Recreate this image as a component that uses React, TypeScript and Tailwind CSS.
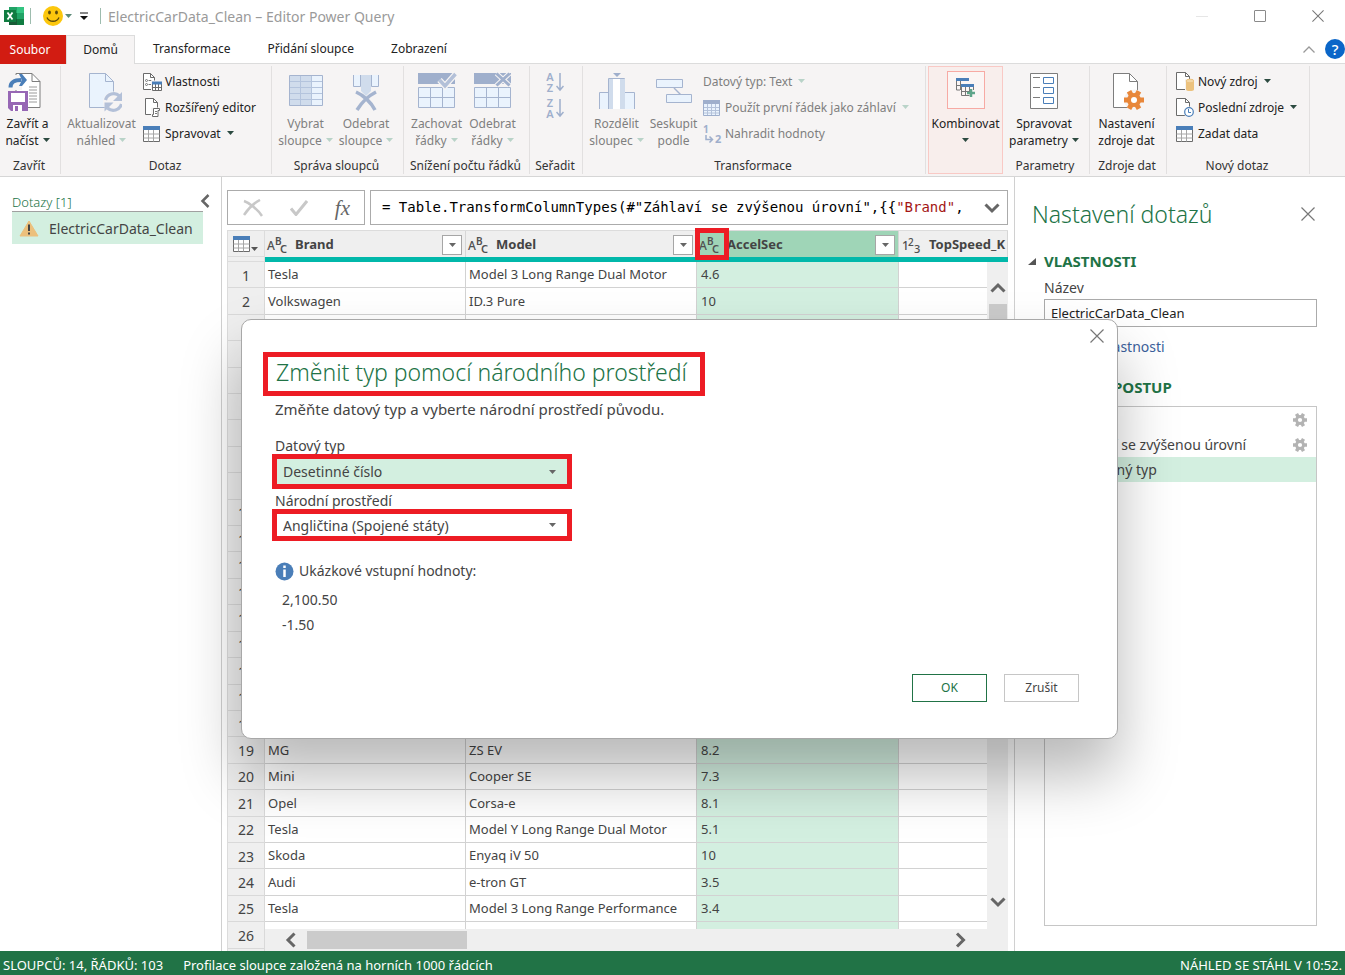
import { useState, type ReactNode } from 'react';
import { clsx } from 'clsx';

type Row = { brand?: string; model?: string; accel?: string };

const rows: Row[] = Array.from({ length: 27 }, () => ({}));
rows[0] = { brand: 'Tesla', model: 'Model 3 Long Range Dual Motor', accel: '4.6' };
rows[1] = { brand: 'Volkswagen', model: 'ID.3 Pure', accel: '10' };
rows[18] = { brand: 'MG', model: 'ZS EV', accel: '8.2' };
rows[19] = { brand: 'Mini', model: 'Cooper SE', accel: '7.3' };
rows[20] = { brand: 'Opel', model: 'Corsa-e', accel: '8.1' };
rows[21] = { brand: 'Tesla', model: 'Model Y Long Range Dual Motor', accel: '5.1' };
rows[22] = { brand: 'Skoda', model: 'Enyaq iV 50', accel: '10' };
rows[23] = { brand: 'Audi', model: 'e-tron GT', accel: '3.5' };
rows[24] = { brand: 'Tesla', model: 'Model 3 Long Range Performance', accel: '3.4' };

/* ---------- icons ---------- */

function Caret({ className = 'text-[#2c4a40]' }: { className?: string }) {
  return (
    <svg width="7" height="4" viewBox="0 0 7 4" className={clsx('inline-block shrink-0', className)}>
      <path d="M0 0h7L3.5 4z" fill="currentColor" />
    </svg>
  );
}

function ExcelIcon() {
  return (
    <svg width="20" height="18" viewBox="0 0 20 18">
      <path d="M5 0h8v6H5z" fill="#21a366" />
      <path d="M13 0h7v6h-7z" fill="#33c481" />
      <path d="M5 6h8v6H5z" fill="#107c41" />
      <path d="M13 6h7v6h-7z" fill="#21a366" />
      <path d="M5 12h15v6H5z" fill="#185c37" />
      <path d="M13 12h7v6h-7z" fill="#107c41" />
      <path d="M0 3h12v12H0z" fill="#107c41" />
      <path d="M3.5 5.5l5 7M8.5 5.5l-5 7" stroke="#fff" strokeWidth="1.8" />
    </svg>
  );
}

function SmileIcon() {
  return (
    <svg width="20" height="20" viewBox="0 0 20 20">
      <circle cx="10" cy="10" r="10" fill="#fcc70d" />
      <ellipse cx="6.5" cy="6.5" rx="1.4" ry="2" fill="#5c4a0c" />
      <ellipse cx="13.5" cy="6.5" rx="1.4" ry="2" fill="#5c4a0c" />
      <path d="M4 11.5c2 5 10 5 12 0" fill="none" stroke="#5c4a0c" strokeWidth="1.3" />
    </svg>
  );
}

function SaveLoadIcon() {
  return (
    <svg width="40" height="40" viewBox="0 0 40 40">
      <path d="M8 1.5h16l8 8v26H8z" fill="#fff" stroke="#7d7d7d" />
      <path d="M24 1.5v8h8" fill="none" stroke="#7d7d7d" />
      <path d="M21 15h8M21 18h8M21 21h8M21 24h8M21 27h8M21 30h8" stroke="#9a9a9a" />
      <path d="M0 3h14v15H0z" fill="#f6f4f4" />
      <path d="M2.500 15.500c0-6 4-7.500 11-7.500" fill="none" stroke="#4a7eb8" strokeWidth="4" />
      <path d="M11 2h3l5 6-5 6h-3l3-6z" fill="#4a7eb8" />
      <path d="M0 19h20v20H3l-3-3z" fill="#9767b5" />
      <path d="M3 21h14v9H3z" fill="#fff" />
      <path d="M5 33h9v6H5z" fill="#fff" />
      <path d="M7 34h3v5H7z" fill="#9767b5" />
    </svg>
  );
}

function RefreshPageIcon() {
  return (
    <svg width="40" height="40" viewBox="-7 0 40 40">
      <path d="M.5 1.500h16l8 8v26H.5z" fill="#eaf3fd" stroke="#a5b4cf" />
      <path d="M16.500 1.500v8h8" fill="none" stroke="#a5b4cf" />
      <circle cx="24.500" cy="30" r="10.500" fill="#f6f4f4" />
      <path d="M16.500 28a8.500 8.500 0 0 1 14-4M32.500 32a8.500 8.500 0 0 1-14 4" fill="none" stroke="#b3c0d8" strokeWidth="3.200" />
      <path d="M33 20v9h-9zM15.500 39.500v-9h9z" fill="#b3c0d8" />
    </svg>
  );
}

function PropertiesIcon() {
  return (
    <svg width="20" height="19" viewBox="0 0 20 19">
      <path d="M.5.5h7l4 4v12H.5z" fill="#fff" stroke="#6b6b6b" />
      <path d="M7.500.5v4h4" fill="none" stroke="#6b6b6b" />
      <circle cx="3.500" cy="7.500" r="1" fill="none" stroke="#777" />
      <circle cx="3.500" cy="11.500" r="1" fill="none" stroke="#777" />
      <path d="M5.500 7.500h3M5.500 11.500h3" stroke="#777" />
      <path d="M8 7.500h12V19H8z" fill="#f6f4f4" />
      <path d="M9.500 9.500h9v8h-9zM9.500 14.500h9M12.500 11v6.500M15.500 11v6.500" fill="#fff" stroke="#6b6b6b" />
      <path d="M9 8.500h10v3H9z" fill="#4a7eb8" />
    </svg>
  );
}

function EditorIcon() {
  return (
    <svg width="18" height="20" viewBox="0 0 18 20">
      <path d="M2.500.5h8l4 4v12h-12z" fill="#fff" stroke="#6b6b6b" />
      <path d="M10.500.5v4h4" fill="none" stroke="#6b6b6b" />
      <path d="M8 9.500h10v10H8z" fill="#f6f4f4" />
      <path d="M10.500 10.500h6v2h-1.500v6H9.500v-2h1z" fill="#fff" stroke="#6b6b6b" />
      <path d="M12 13.500h2M12 15.500h2" stroke="#777" />
    </svg>
  );
}

function TableIcon() {
  return (
    <svg width="17" height="16" viewBox="0 0 17 16" className="shrink-0">
      <path d="M.5.5h16v15H.5z" fill="#fff" stroke="#6b6b6b" />
      <path d="M5.500 3.500v12M10.500 3.500v12M.5 8h16M.5 12h16" stroke="#a6a6a6" />
      <path d="M0 0h17v4H0z" fill="#4a7eb8" />
    </svg>
  );
}

function FirstRowIcon() {
  return (
    <svg width="17" height="16" viewBox="0 0 17 16" className="shrink-0">
      <path d="M.5.5h16v15H.5z" fill="#eaf3fd" />
      <path d="M4.500 3.500v12M8.500 3.500v12M12.500 3.500v12M.5 7.500h16M.5 10.500h16M.5 13h16" stroke="#b4c2da" />
      <path d="M.5.5h16v15H.5z" fill="none" stroke="#9fafcc" />
      <path d="M0 0h17v4H0z" fill="#9fafcc" />
    </svg>
  );
}

function ChooseColumnsIcon() {
  return (
    <svg width="36" height="40" viewBox="0 0 36 40">
      <path d="M1.500 3.500h33v30h-33z" fill="#eaf3fd" />
      <path d="M1.500 3.500h22v30h-22z" fill="#d0dcec" />
      <path d="M1.500 9.500h33M1.500 15.500h33M1.500 21.500h33M1.500 27.500h33M12.500 3.500v30M23.500 3.500v30" stroke="#b4c4dd" />
      <path d="M1.500 3.500h33v30h-33z" fill="none" stroke="#a5b4cf" />
    </svg>
  );
}

function RemoveColumnsIcon() {
  return (
    <svg width="28" height="40" viewBox="0 0 28 40">
      <path d="M1.500 3v11.500h7V3M19.500 3v11.500h7V3" fill="#eaf3fd" stroke="#a5b4cf" />
      <path d="M9 3h10v16l-5 5-5-5z" fill="#d0dcec" />
      <path d="M4 20c7 3 15 10 19 18M24 20c-8 4-14 10-19 18" fill="none" stroke="#a5b4cf" strokeWidth="3.500" />
    </svg>
  );
}

function RowsIcon({ mark }: { mark: 'keep' | 'remove' }) {
  return (
    <svg width="40" height="40" viewBox="0 0 40 40">
      <path d="M1 1h37v11H1z" fill="#9fafcc" />
      <path d="M1.500 15.500h36v20h-36zM1.500 25.500h36M13.500 15.500v20M25.500 15.500v20" fill="#eaf3fd" stroke="#a5b4cf" />
      {mark === 'keep' ? (
        <>
          <path d="M22.500 8l5.500 6L38.500 2" fill="none" stroke="#f6f4f4" strokeWidth="6" />
          <path d="M22.500 8l5.500 6L38.500 2" fill="none" stroke="#b3c0d8" strokeWidth="3.500" />
        </>
      ) : (
        <>
          <path d="M23.500 1.500l13 12M36.500 1.500l-13 12" stroke="#f6f4f4" strokeWidth="5" />
          <path d="M23.500 1.500l13 12M36.500 1.500l-13 12" stroke="#9fafcc" strokeWidth="3" />
        </>
      )}
    </svg>
  );
}

function SortIcon({ top, bottom }: { top: string; bottom: string }) {
  return (
    <span className="flex items-center gap-0.5 text-[#9fafcc]">
      <span className="flex w-2 flex-col items-center gap-0.5 text-[11px] leading-[9px] font-semibold">
        <span>{top}</span>
        <span>{bottom}</span>
      </span>
      <svg width="8" height="20" viewBox="0 0 8 20">
        <path d="M4 1v17M.5 14L4 18l3.500-4" fill="none" stroke="currentColor" strokeWidth="1.500" />
      </svg>
    </span>
  );
}

function SplitColumnIcon() {
  return (
    <svg width="38" height="40" viewBox="0 0 38 40">
      <path d="M1.500 37V20.500h10V37M26.500 37V20.500h10V37" fill="#eaf3fd" stroke="#a5b4cf" />
      <path d="M10.500 37V6.500h16V37" fill="#fff" stroke="#a5b4cf" />
      <path d="M11 7h4v30h-4zM22 7h5v30h-5z" fill="#d0dcec" />
      <path d="M15 1h8l-4 4z" fill="#9fafcc" />
    </svg>
  );
}

function GroupByIcon() {
  return (
    <svg width="38" height="40" viewBox="0 0 38 40">
      <path d="M19 16l8 8" stroke="#a5b4cf" strokeWidth="1.500" />
      <path d="M1.500 7.500h26v8h-26zM11.500 22.500h25v8h-25z" fill="#eaf3fd" stroke="#a5b4cf" />
    </svg>
  );
}

function ReplaceIcon() {
  return (
    <svg width="19" height="19" viewBox="0 0 19 19" className="overflow-visible font-['Noto_Sans',sans-serif]">
      <text x="0" y="8" fontSize="10" fontWeight="700" fill="#9fafcc">1</text>
      <text x="12" y="18" fontSize="11" fontWeight="700" fill="#9fafcc">2</text>
      <path d="M3 10v4.500h6M6.500 11.500l3 3-3 3" fill="none" stroke="#9fafcc" strokeWidth="1.500" />
    </svg>
  );
}

function CombineIcon() {
  return (
    <svg width="20" height="20" viewBox="0 0 20 20">
      <path d="M.5 1v11H4M.5 7.500H5M4.500 3v9" fill="none" stroke="#777" />
      <path d="M0 0h13v3H0z" fill="#4a7eb8" />
      <path d="M5.500 8v9.500h8M5.500 13.500h8M9.500 9v8.500M13.500 9v5M17.500 9v3" fill="none" stroke="#777" />
      <path d="M5 6h13v3H5z" fill="#4a7eb8" />
      <path d="M15 11v8M11 15h8" stroke="#5fa58a" strokeWidth="2.500" />
    </svg>
  );
}

function ParametersIcon() {
  return (
    <svg width="28" height="40" viewBox="0 0 28 40">
      <path d="M.5 1.500h27v35H.5z" fill="#fff" stroke="#7d7d7d" />
      <path d="M3 5.500h7M3 15.500h7M3 25.500h7" stroke="#7d7d7d" />
      <path d="M13.500 5.500h10v6h-10zM13.500 15.500h10v6h-10zM13.500 25.500h10v6h-10z" fill="none" stroke="#4a7eb8" />
    </svg>
  );
}

function Gear({ className, size }: { className: string; size: number }) {
  return (
    <svg width={size} height={size} viewBox="0 0 20 20" className={className}>
      <g fill="currentColor">
        <path d="M7.500 0h5v20h-5z" transform="rotate(30 10 10)" />
        <path d="M7.500 0h5v20h-5z" transform="rotate(90 10 10)" />
        <path d="M7.500 0h5v20h-5z" transform="rotate(150 10 10)" />
        <circle cx="10" cy="10" r="7" />
      </g>
      <circle cx="10" cy="10" r="3" fill="#fff" />
    </svg>
  );
}

function SourceSettingsIcon() {
  return (
    <span className="relative ml-1 block h-10 w-8">
      <svg width="26" height="38" viewBox="0 0 26 38">
        <path d="M.5 1.500h16l8 8v26H.5z" fill="#fff" stroke="#7d7d7d" />
        <path d="M16.500 1.500v8h8" fill="none" stroke="#7d7d7d" />
        <circle cx="21.500" cy="28" r="10.500" fill="#f6f4f4" />
      </svg>
      <Gear size={20} className="absolute top-[18px] left-[11px] text-[#e8873a]" />
    </span>
  );
}

function NewSourceIcon() {
  return (
    <svg width="18" height="20" viewBox="0 0 18 20">
      <path d="M.5.5h9l4 4v13H.5z" fill="#fff" stroke="#6b6b6b" />
      <path d="M9.500.5v4h4" fill="none" stroke="#6b6b6b" />
      <path d="M9 7h9v12H9z" fill="#f6f4f4" />
      <path d="M10 9v8.500c0 2 8 2 8 0V9z" fill="#ecc27e" />
      <ellipse cx="14" cy="9" rx="4" ry="1.800" fill="#f3d7a6" stroke="#ecc27e" />
    </svg>
  );
}

function RecentSourceIcon() {
  return (
    <svg width="18" height="20" viewBox="0 0 18 20">
      <path d="M.5.5h9l4 4v13H.5z" fill="#fff" stroke="#6b6b6b" />
      <path d="M9.500.5v4h4" fill="none" stroke="#6b6b6b" />
      <circle cx="13" cy="14" r="5.500" fill="#f6f4f4" />
      <circle cx="13" cy="14" r="4.300" fill="#fff" stroke="#4a7eb8" strokeWidth="1.200" />
      <path d="M12.500 11v3.500H15" fill="none" stroke="#4a7eb8" />
    </svg>
  );
}

function TextTypeIcon() {
  return (
    <svg width="20" height="18" viewBox="0 0 20 18" fill="#505050" className="shrink-0 overflow-visible font-['Noto_Sans',sans-serif]">
      <text x="-1" y="14" fontSize="12" fontWeight="500">A</text>
      <text x="7" y="9" fontSize="10" fontWeight="600">B</text>
      <text x="12" y="17" fontSize="11" fontWeight="600">C</text>
    </svg>
  );
}

function NumberTypeIcon() {
  return (
    <svg width="20" height="18" viewBox="0 0 20 18" fill="#505050" className="shrink-0 overflow-visible font-['Noto_Sans',sans-serif]">
      <text x="0" y="14" fontSize="12" fontWeight="500">1</text>
      <text x="6" y="10" fontSize="10" fontWeight="500">2</text>
      <text x="12" y="17" fontSize="11" fontWeight="500">3</text>
    </svg>
  );
}

function Cross({ size = 14 }: { size?: number }) {
  return (
    <svg width={size} height={size} viewBox="0 0 14 14">
      <path d="M.5.5l13 13M13.500.5l-13 13" stroke="#777" strokeWidth="1.200" />
    </svg>
  );
}

function Chevron({ direction }: { direction: 'up' | 'down' | 'left' | 'right' }) {
  const paths = {
    up: 'M1.500 11.500L8 5l6.500 6.500',
    down: 'M1.500 4.500L8 11l6.500-6.500',
    left: 'M11.500 1.500L5 8l6.500 6.500',
    right: 'M5 1.500L11.500 8 5 14.500',
  };
  return (
    <svg width="16" height="16" viewBox="0 0 16 16">
      <path d={paths[direction]} fill="none" stroke="#666" strokeWidth="3" />
    </svg>
  );
}

/* ---------- ribbon ---------- */

function Group({ label, className, children }: { label: string; className: string; children: ReactNode }) {
  return (
    <section className={clsx('flex shrink-0 flex-col border-r border-[#e2e0e0]', className)}>
      <div className="flex flex-1">{children}</div>
      <h2 className="h-4 pr-0.5 text-center leading-4 whitespace-nowrap text-[#333]">{label}</h2>
    </section>
  );
}

type BigButtonProps = { icon: ReactNode; lines: [string, string]; caret?: boolean; disabled?: boolean; className: string };

function BigButton({ icon, lines, caret = false, disabled = false, className }: BigButtonProps) {
  return (
    <button
      type="button"
      disabled={disabled}
      className={clsx('flex shrink-0 flex-col items-center pt-1.5 leading-[17px] whitespace-nowrap', disabled ? 'text-[#7f7f7f]' : 'text-[#222]', className)}
    >
      <span className="flex h-[43px] justify-center">{icon}</span>
      <span>{lines[0]}</span>
      <span className="flex items-center gap-1">
        {lines[1]}
        {caret && <Caret className={clsx('-mt-0.5', disabled ? 'text-[#b9d3c8]' : 'text-[#2c4a40]')} />}
      </span>
    </button>
  );
}

type SmallButtonProps = { icon?: ReactNode; label: string; caret?: boolean; disabled?: boolean };

function SmallButton({ icon, label, caret = false, disabled = false }: SmallButtonProps) {
  return (
    <button
      type="button"
      disabled={disabled}
      className={clsx('flex h-[26px] items-center whitespace-nowrap', disabled ? 'text-[#7f7f7f]' : 'text-[#222]')}
    >
      {icon && <span className="w-[22px] shrink-0">{icon}</span>}
      {label}
      {caret && <Caret className={clsx('-mt-0.5 ml-1.5', disabled ? 'text-[#b9d3c8]' : 'text-[#2c4a40]')} />}
    </button>
  );
}

function Ribbon() {
  return (
    <div className="flex h-[113px] shrink-0 border-b border-[#d6d6d6] bg-[#f6f4f4] pt-0.5 pb-0.5">
      <Group label="Zavřít" className="w-[61px]">
        <BigButton className="w-[55px]" icon={<SaveLoadIcon />} lines={['Zavřít a', 'načíst']} caret />
      </Group>
      <Group label="Dotaz" className="w-[211px]">
        <BigButton className="w-[81px]" icon={<RefreshPageIcon />} lines={['Aktualizovat', 'náhled']} caret disabled />
        <div className="pt-[3px] pl-px">
          <SmallButton icon={<PropertiesIcon />} label="Vlastnosti" />
          <SmallButton icon={<EditorIcon />} label="Rozšířený editor" />
          <SmallButton icon={<TableIcon />} label="Spravovat" caret />
        </div>
      </Group>
      <Group label="Správa sloupců" className="w-[132px]">
        <BigButton className="w-[67px]" icon={<ChooseColumnsIcon />} lines={['Vybrat', 'sloupce']} caret disabled />
        <BigButton className="w-[54px]" icon={<RemoveColumnsIcon />} lines={['Odebrat', 'sloupce']} caret disabled />
      </Group>
      <Group label="Snížení počtu řádků" className="w-[126px]">
        <BigButton className="w-[65px]" icon={<RowsIcon mark="keep" />} lines={['Zachovat', 'řádky']} caret disabled />
        <BigButton className="w-[47px]" icon={<RowsIcon mark="remove" />} lines={['Odebrat', 'řádky']} caret disabled />
      </Group>
      <Group label="Seřadit" className="w-[53px]">
        <div className="flex w-full flex-col items-center gap-1.5 pt-1.5 pr-0.5">
          <button type="button" aria-label="Seřadit vzestupně">
            <SortIcon top="A" bottom="Z" />
          </button>
          <button type="button" aria-label="Seřadit sestupně">
            <SortIcon top="Z" bottom="A" />
          </button>
        </div>
      </Group>
      <Group label="Transformace" className="w-[343px]">
        <BigButton className="w-[67px]" icon={<SplitColumnIcon />} lines={['Rozdělit', 'sloupec']} caret disabled />
        <BigButton className="w-[47px]" icon={<GroupByIcon />} lines={['Seskupit', 'podle']} disabled />
        <div className="pt-[3px] pl-1.5">
          <SmallButton label="Datový typ: Text" caret disabled />
          <SmallButton icon={<FirstRowIcon />} label="Použít první řádek jako záhlaví" caret disabled />
          <SmallButton icon={<ReplaceIcon />} label="Nahradit hodnoty" disabled />
        </div>
      </Group>
      <button
        type="button"
        className="ml-0.5 flex w-[75px] shrink-0 flex-col items-center border border-[#f9c9c5] bg-[#f8eeec] pt-1 leading-[17px] text-[#222]"
      >
        <span className="mb-1.5 flex size-[38px] items-center justify-center border border-[#f7aaa4] bg-[#fbf5f4] pb-1">
          <CombineIcon />
        </span>
        <span>Kombinovat</span>
        <Caret className="mt-1.5 text-[#2c4a40]" />
      </button>
      <Group label="Parametry" className="w-[87px]">
        <BigButton className="w-[82px]" icon={<ParametersIcon />} lines={['Spravovat', 'parametry']} caret />
      </Group>
      <Group label="Zdroje dat" className="w-[77px]">
        <BigButton className="w-[73px]" icon={<SourceSettingsIcon />} lines={['Nastavení', 'zdroje dat']} />
      </Group>
      <Group label="Nový dotaz" className="w-[143px]">
        <div className="pt-[3px] pl-[9px]">
          <SmallButton icon={<NewSourceIcon />} label="Nový zdroj" caret />
          <SmallButton icon={<RecentSourceIcon />} label="Poslední zdroje" caret />
          <SmallButton icon={<TableIcon />} label="Zadat data" />
        </div>
      </Group>
    </div>
  );
}

function TitleBar() {
  return (
    <header className="flex h-[35px] shrink-0 items-center pr-[21px] pb-[3px] pl-1">
      <ExcelIcon />
      <span className="ml-1.5 h-4 w-px bg-[#9dbcae]" />
      <button type="button" aria-label="Odeslat názor" className="ml-3 flex items-center gap-0.5">
        <SmileIcon />
        <Caret className="text-[#5c8a78]" />
      </button>
      <button type="button" aria-label="Přizpůsobit panel" className="ml-2">
        <svg width="8" height="8" viewBox="0 0 8 8">
          <path d="M0 1h8" stroke="#111" />
          <path d="M0 4h8L4 8z" fill="#111" />
        </svg>
      </button>
      <span className="ml-3 h-4 w-px bg-[#9dbcae]" />
      <h1 className="ml-[7px] text-[14px] text-[#9a9a9a]">ElectricCarData_Clean – Editor Power Query</h1>
      <div className="ml-auto flex items-center gap-[46px]">
        <button type="button" aria-label="Minimalizovat" className="h-px w-3 bg-[#e6e6e6]" />
        <button type="button" aria-label="Maximalizovat" className="size-3 rounded-[1px] border border-[#8a8a8a]" />
        <button type="button" aria-label="Zavřít okno">
          <Cross size={12} />
        </button>
      </div>
    </header>
  );
}

function TabBar() {
  return (
    <nav className="flex h-[29px] shrink-0 items-stretch text-[#222]">
      <button type="button" className="w-[66px] bg-[#d21c12] pr-1.5 text-white">
        Soubor
      </button>
      <button type="button" className="w-[69px] border-x border-t border-[#dcdcdc] bg-[#f6f4f4]">
        Domů
      </button>
      <div className="flex flex-1 items-center gap-[37px] border-b border-[#dcdcdc] pl-[18px]">
        <button type="button">Transformace</button>
        <button type="button">Přidání sloupce</button>
        <button type="button">Zobrazení</button>
        <button type="button" aria-label="Sbalit pás karet" className="ml-auto -mr-[27px]">
          <svg width="12" height="7" viewBox="0 0 12 7">
            <path d="M.5 6.500L6 1l5.500 5.500" fill="none" stroke="#999" strokeWidth="1.300" />
          </svg>
        </button>
        <button type="button" aria-label="Nápověda" className="size-5 rounded-full bg-[#0a66c8] text-[15px] leading-5 font-medium text-white">
          ?
        </button>
      </div>
    </nav>
  );
}

/* ---------- panels ---------- */

function QueriesPane() {
  return (
    <aside className="w-[222px] shrink-0 border-r border-[#d0d0d0] pl-3">
      <div className="flex h-[35px] items-end pr-2">
        <h2 className="w-[191px] shrink-0 border-b border-[#a0a0a0] leading-[17px] font-light text-[#217346]">Dotazy [1]</h2>
        <button type="button" aria-label="Sbalit podokno" className="mb-1 -ml-[3px] shrink-0">
          <svg width="10" height="14" viewBox="0 0 10 14">
            <path d="M8.500 1L2.500 7l6 6" fill="none" stroke="#666" strokeWidth="2.500" />
          </svg>
        </button>
      </div>
      <button type="button" className="flex h-8 w-[191px] items-center bg-[#d3efe0] pl-[7px] text-[14px] whitespace-nowrap text-[#444]">
        <svg width="20" height="17" viewBox="0 0 20 17" className="mr-2.5 shrink-0">
          <path d="M10 1l9 15H1z" fill="#ecc07c" stroke="#ecc07c" strokeLinejoin="round" />
          <path d="M10 4.500v6.500M10 12.500v2" stroke="#444" strokeWidth="2" />
        </svg>
        ElectricCarData_Clean
      </button>
    </aside>
  );
}

function FormulaBar() {
  return (
    <div className="flex h-[35px] shrink-0 gap-[5px]">
      <div className="flex w-[138px] shrink-0 items-center justify-between border border-[#ababab] pr-3.5 pl-[15px]">
        <button type="button" aria-label="Zrušit vzorec">
          <svg width="20" height="18" viewBox="0 0 20 18">
            <path d="M1 2c6 2 14 9 18 15M17 1C11 4 5 10 1 16" fill="none" stroke="#c8c8c8" strokeWidth="2.500" />
          </svg>
        </button>
        <button type="button" aria-label="Potvrdit vzorec">
          <svg width="18" height="16" viewBox="0 0 18 16">
            <path d="M1 8.500l5 6L17 1" fill="none" stroke="#c8c8c8" strokeWidth="3" />
          </svg>
        </button>
        <button type="button" aria-label="Vložit krok" className="font-['Liberation_Serif',serif] text-[21px] leading-6 text-[#666] italic">
          fx
        </button>
      </div>
      <div className="flex min-w-0 flex-1 items-center border border-[#ababab] pr-[7px] pl-[11px]">
        <div
          role="textbox"
          aria-label="Vzorec"
          className="min-w-0 flex-1 overflow-hidden font-['DejaVu_Sans_Mono',monospace] text-[14px] whitespace-pre text-black"
        >
          = Table.TransformColumnTypes(#"Záhlaví se zvýšenou úrovní",{'{{'}
          <span className="text-[#a31515]">"Brand"</span>,
        </div>
        <button type="button" aria-label="Rozbalit vzorec">
          <Chevron direction="down" />
        </button>
      </div>
    </div>
  );
}

type HeaderCellProps = { icon: ReactNode; name: string; filter?: boolean; active?: boolean };

function HeaderCell({ icon, name, filter = true, active = false }: HeaderCellProps) {
  return (
    <th scope="col" className={clsx('h-[26px] border-r border-[#d6d6d6] p-0', active && 'bg-[#9fd5b7]')}>
      <div className={clsx('relative flex h-[26px] items-center gap-[7px] pt-px pl-[3px]', filter && 'pr-[3px]')}>
        {icon}
        <span className="flex-1 text-left font-bold whitespace-nowrap text-[#444]">{name}</span>
        {filter && (
          <button type="button" aria-label={`Filtr ${name}`} className="flex size-5 shrink-0 items-center justify-center border border-[#a6a6a6] bg-white">
            <Caret className="text-[#666]" />
          </button>
        )}
        {active && <span className="absolute -top-[3px] -left-0.5 h-8 w-[34px] border-[5px] border-[#ed1c24]" />}
      </div>
    </th>
  );
}

function DataGrid() {
  return (
    <div className="relative mt-[5px] min-h-0 flex-1 bg-[#efefef]">
      {/* 4px of headroom so the marker frame is not clipped */}
      <div className="absolute inset-x-0 -top-1 bottom-0 overflow-hidden pt-1">
        <table className="h-[745px] w-full table-fixed border-separate border-spacing-0 border-t border-l border-[#dcdcdc]">
          <colgroup>
            <col className="w-[37px]" />
            <col className="w-[201px]" />
            <col className="w-[231px]" />
            <col className="w-[202px]" />
            <col />
          </colgroup>
          <thead>
            <tr className="h-[26px]">
              <td className="h-[26px] border-r border-b border-[#dcdcdc] p-0">
                <button type="button" aria-label="Nabídka tabulky" className="flex items-center gap-px pl-[5px]">
                  <TableIcon />
                  <Caret className="mt-2.5 text-[#555]" />
                </button>
              </td>
              <HeaderCell icon={<TextTypeIcon />} name="Brand" />
              <HeaderCell icon={<TextTypeIcon />} name="Model" />
              <HeaderCell icon={<TextTypeIcon />} name="AccelSec" active />
              <HeaderCell icon={<NumberTypeIcon />} name="TopSpeed_K" filter={false} />
            </tr>
            <tr className="h-[5px]">
              <td className="h-[5px] border-r border-b border-[#dcdcdc] p-0" />
              <td colSpan={4} className="h-[5px] bg-[#01b8aa] p-0" />
            </tr>
          </thead>
          <tbody className="text-[#444]">
            {rows.map((row, i) => (
              <tr key={i}>
                <th scope="row" className="border-r border-b border-[#d9d9d9] p-0 pt-0.5 text-center text-[14px] leading-5 font-normal">
                  {i < 26 ? i + 1 : '\u00a0'}
                </th>
                <td className="border-r border-b border-[#d2d2d2] bg-white p-0 pt-px pl-[3px]">{row.brand}</td>
                <td className="border-r border-b border-[#d2d2d2] bg-white p-0 pt-px pl-[3px]">{row.model}</td>
                <td className="border-r border-b border-[#d2d2d2] bg-[#d3efe0] p-0 pt-px pl-1">{row.accel}</td>
                <td className="border-b border-[#d2d2d2] bg-white p-0" />
              </tr>
            ))}
          </tbody>
        </table>
      </div>
      <div className="absolute top-8 right-0 bottom-0 flex w-[21px] flex-col items-center bg-[#efefef] pt-[18px] pb-[41px]">
        <Chevron direction="up" />
        <span className="mt-2 h-24 w-[18px] bg-[#cbcbcb]" />
        <span className="mt-auto">
          <Chevron direction="down" />
        </span>
      </div>
      <div className="absolute right-0 bottom-0 left-[38px] flex h-[22px] items-center bg-[#efefef] pr-10 pl-[18px]">
        <Chevron direction="left" />
        <span className="ml-2 h-[18px] w-40 bg-[#cbcbcb]" />
        <span className="ml-auto">
          <Chevron direction="right" />
        </span>
      </div>
    </div>
  );
}

function SettingsPane() {
  const [name, setName] = useState('ElectricCarData_Clean');
  return (
    <aside className="flex w-[331px] shrink-0 flex-col border-l border-[#d0d0d0] pr-7 pb-[25px] pl-[29px] text-[14px] text-[#444]">
      <div className="-ml-3 flex h-[74px] items-center justify-between">
        <h2 className="text-[23px] font-light text-[#217346]">Nastavení dotazů</h2>
        <button type="button" aria-label="Zavřít podokno" className="mr-0.5">
          <Cross />
        </button>
      </div>
      <h3 className="-ml-4 flex h-5 items-center gap-2 text-[15px] font-bold text-[#217346]">
        <svg width="8" height="7" viewBox="0 0 8 7">
          <path d="M8 0v7H0z" fill="#555" />
        </svg>
        VLASTNOSTI
      </h3>
      <label htmlFor="query-name" className="mt-[7px] leading-5">
        Název
      </label>
      <input
        id="query-name"
        value={name}
        onChange={(e) => setName(e.target.value)}
        className="mt-px h-7 w-full border border-[#ababab] px-1.5 text-[13px] text-[#222] outline-none"
      />
      <a href="#vlastnosti" className="mt-2.5 leading-5 text-[#3b5f9c]">
        Všechny vlastnosti
      </a>
      <h3 className="mt-5 h-5 text-[15px] leading-5 font-bold text-[#217346]">POUŽITÝ POSTUP</h3>
      <ul className="mt-[9px] flex-1 border border-[#c6c6c6]">
        {['Zdroj', 'Záhlaví se zvýšenou úrovní', 'Změněný typ'].map((step, i) => (
          <li key={step} className={clsx('flex h-[25px] items-center justify-between pr-[9px] pl-[26px]', i === 2 && 'bg-[#d3efe0]')}>
            {step}
            {i < 2 && <Gear size={14} className="text-[#b3b3b3]" />}
          </li>
        ))}
      </ul>
    </aside>
  );
}

/* ---------- dialog ---------- */

type DropdownProps = { id: string; label: string; options: string[]; className: string };

function Dropdown({ id, label, options, className }: DropdownProps) {
  return (
    <div>
      <label htmlFor={id} className="ml-[3px] block leading-[17px]">
        {label}
      </label>
      <div className={clsx('relative w-[300px] border-[5px] border-[#ed1c24]', className)}>
        <select id={id} className="block h-full w-full appearance-none pl-1.5 outline-none">
          {options.map((option) => (
            <option key={option}>{option}</option>
          ))}
        </select>
        <span className="pointer-events-none absolute inset-y-0 right-[11px] flex items-center">
          <Caret className="text-[#666]" />
        </span>
      </div>
    </div>
  );
}

function LocaleDialog({ onClose }: { onClose: () => void }) {
  return (
    <div
      role="dialog"
      aria-labelledby="dialog-title"
      className="absolute top-[319px] left-[241px] flex h-[420px] w-[877px] flex-col rounded-[10px] border border-[#a8a8a8] bg-white pr-[38px] pb-9 pl-[21px] text-[14px] text-[#444] shadow-[0_36px_60px_0_rgba(0,0,0,0.28)]"
    >
      <button type="button" aria-label="Zavřít" onClick={onClose} className="absolute top-[9px] right-[13px]">
        <Cross />
      </button>
      <h2
        id="dialog-title"
        className="mt-8 flex h-11 w-[442px] items-center border-[5px] border-[#ed1c24] pb-1 pl-2 text-[23px] font-light whitespace-nowrap text-[#217346]"
      >
        Změnit typ pomocí národního prostředí
      </h2>
      <p className="mt-[3px] ml-3 text-[15px] leading-5">Změňte datový typ a vyberte národní prostředí původu.</p>
      <div className="mt-[18px] ml-[9px] flex flex-col gap-[3px]">
        <Dropdown id="data-type" label="Datový typ" options={['Desetinné číslo']} className="h-[35px] bg-[#d3efe0]" />
        <Dropdown id="locale" label="Národní prostředí" options={['Angličtina (Spojené státy)']} className="h-8" />
      </div>
      <p className="mt-5 ml-3 flex items-center gap-[5px] leading-5">
        <svg width="19" height="19" viewBox="0 0 19 19">
          <circle cx="9.500" cy="9.500" r="9" fill="#4a7eb8" />
          <path d="M9.500 3.500v2.500M9.500 7.500v7.500" stroke="#fff" strokeWidth="2.500" />
        </svg>
        Ukázkové vstupní hodnoty:
      </p>
      <p className="mt-1.5 ml-[19px] leading-[25px]">
        2,100.50
        <br />
        -1.50
      </p>
      <div className="mt-auto flex justify-end gap-[17px] text-[12px]">
        <button type="button" className="h-7 w-[75px] border border-[#217346] text-[#217346]">
          OK
        </button>
        <button type="button" onClick={onClose} className="h-7 w-[75px] border border-[#c6c6c6]">
          Zrušit
        </button>
      </div>
    </div>
  );
}

export default function App() {
  const [dialogOpen, setDialogOpen] = useState(true);

  return (
    <div className="relative flex h-screen flex-col overflow-hidden bg-white font-['Noto_Sans',sans-serif] text-[12px] text-[#333]">
      <TitleBar />
      <TabBar />
      <Ribbon />
      <main className="flex min-h-0 flex-1 text-[13px]">
        <QueriesPane />
        <section className="flex min-w-0 flex-1 flex-col pt-[13px] pr-1.5 pl-[5px]">
          <FormulaBar />
          <DataGrid />
        </section>
        <SettingsPane />
      </main>
      <footer className="flex h-6 shrink-0 items-center bg-[#217346] px-[3px] pt-[5px] text-[13px] text-white">
        <span>SLOUPCŮ: 14, ŘÁDKŮ: 103</span>
        <span className="ml-5">Profilace sloupce založená na horních 1000 řádcích</span>
        <span className="ml-auto">NÁHLED SE STÁHL V 10:52.</span>
      </footer>
      {dialogOpen && <LocaleDialog onClose={() => setDialogOpen(false)} />}
    </div>
  );
}
